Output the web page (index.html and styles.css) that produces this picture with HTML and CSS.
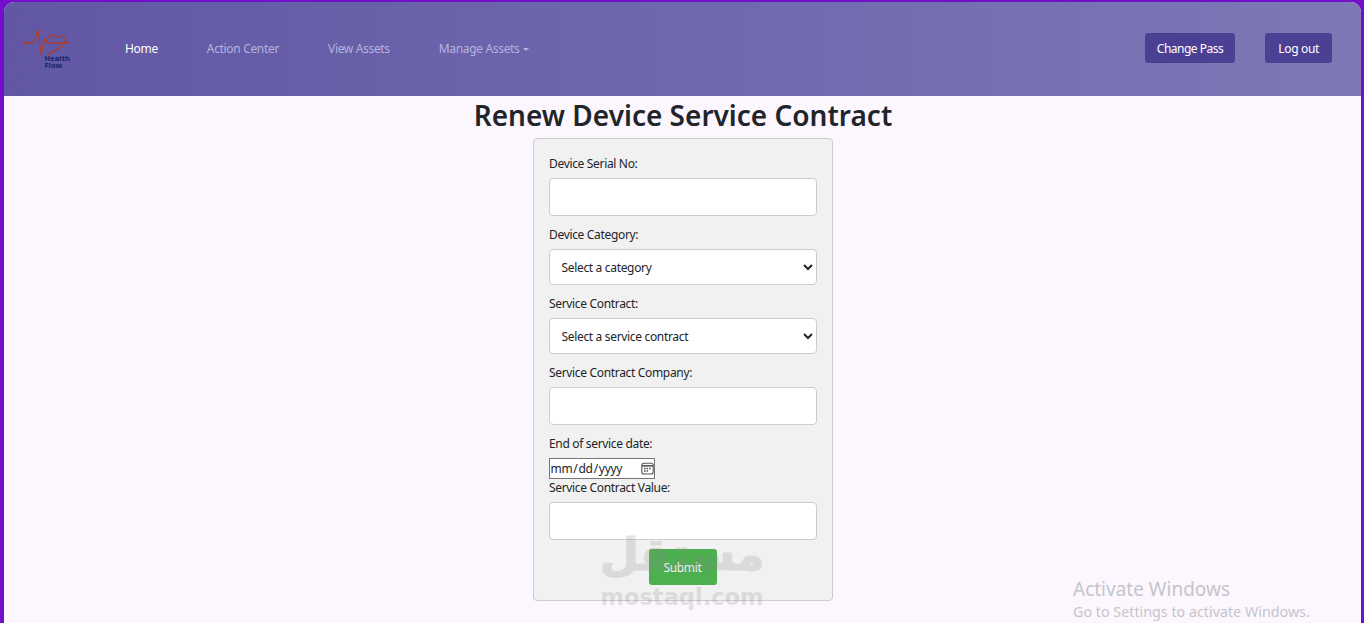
FILE: index.html
```html
<!DOCTYPE html>
<html lang="en">
<head>
<meta charset="utf-8">
<title>Renew Device Service Contract</title>
<link rel="stylesheet" href="styles.css">
</head>
<body>
<div class="frame">
  <header class="topbar">
    <a class="logo" href="#" aria-label="Health Flow">
      <svg class="logo-svg" width="72" height="94" viewBox="0 0 72 94">
        <g fill="#453c8a">
          <circle cx="8" cy="9" r=".6"/><circle cx="14" cy="13" r=".6"/><circle cx="6" cy="21" r=".6"/><circle cx="12" cy="25" r=".6"/><circle cx="7" cy="37" r=".6"/><circle cx="10" cy="49" r=".6"/><circle cx="6" cy="59" r=".6"/><circle cx="12" cy="62" r=".6"/><circle cx="16" cy="73" r=".6"/><circle cx="8" cy="83" r=".6"/><circle cx="14" cy="89" r=".6"/>
        </g>
        <path d="M20 41H29L31 37L34 27L37 53L40 37L42 41H66M42 41C43 36 45 33 48 33C51 33 53 36 55 35C58 33 62 35 61 39C60 44 52 48 44 53" fill="none" stroke="#a8402f" stroke-width="1.3"/>
        <circle cx="20.5" cy="41" r="1.8" fill="#a8402f"/>
        <text class="logo-text" x="40.5" y="58.5">Health</text>
        <text class="logo-text" x="40.5" y="65.8">Flow</text>
      </svg>
    </a>
    <nav class="nav">
      <a class="nav-link active" href="#">Home</a>
      <a class="nav-link" href="#">Action Center</a>
      <a class="nav-link" href="#">View Assets</a>
      <a class="nav-link caret" href="#">Manage Assets</a>
    </nav>
    <div class="actions">
      <button class="btn-nav btn-tight" type="button">Change Pass</button>
      <button class="btn-nav" type="button">Log out</button>
    </div>
  </header>
  <main class="content">
    <h1 class="title">Renew Device Service Contract</h1>
    <form class="card">
      <label class="label" for="serial">Device Serial No:</label>
      <input class="control" id="serial" type="text">
      <label class="label" for="category">Device Category:</label>
      <select class="control select" id="category"><option>Select a category</option></select>
      <label class="label" for="contract">Service Contract:</label>
      <select class="control select" id="contract"><option>Select a service contract</option></select>
      <label class="label" for="company">Service Contract Company:</label>
      <input class="control" id="company" type="text">
      <label class="label" for="end">End of service date:</label>
      <input class="date" id="end" type="date">
      <label class="label" for="value">Service Contract Value:</label>
      <input class="control" id="value" type="text">
      <button class="submit" type="submit">Submit</button>
    </form>
  </main>
  <div class="watermark" aria-hidden="true">
    <div class="wm-ar" lang="ar" dir="rtl">مستقل</div>
    <div class="wm-en">mostaql.com</div>
  </div>
  <div class="activate">
    <div class="activate-title">Activate Windows</div>
    <div class="activate-sub">Go to Settings to activate Windows.</div>
  </div>
</div>
</body>
</html>
```
FILE: styles.css
```css
* { box-sizing: border-box; }
html, body { margin: 0; height: 100%; }
body {
  background: #7110c8;
  padding: 2px 3px 0 4px;
  overflow: hidden;
  font-family: "Noto Sans", "Open Sans", sans-serif;
  font-size: 12px;
  letter-spacing: -.33px;
  color: #212529;
}
.frame {
  height: 621px;
  background: #fcf7ff;
  border-radius: 10px 10px 0 0;
  overflow: hidden;
}
.topbar {
  height: 94px;
  display: flex;
  align-items: center;
  background: linear-gradient(90deg, #6157a5 0%, #7e78b6 100%);
}
.logo { display: block; width: 72px; height: 94px; flex: none; }
.logo-svg { display: block; }
.logo-text { font-family: "Noto Sans", sans-serif; font-size: 7.5px; font-weight: 800; letter-spacing: 0; fill: #1e2a6e; }
.nav { display: flex; gap: 49px; margin-left: 49px; }
.nav-link { color: #b4b4de; text-decoration: none; line-height: 20px; }
.nav-link.active { color: #fff; }
.caret::after {
  content: "";
  display: inline-block;
  margin-left: 3px;
  vertical-align: 2px;
  border-top: 3.5px solid currentColor;
  border-left: 3.5px solid transparent;
  border-right: 3.5px solid transparent;
}
.actions { margin-left: auto; margin-right: 29px; margin-bottom: 2px; display: flex; gap: 30px; }
.btn-nav {
  height: 30px;
  padding: 0 13px;
  border: 0;
  border-radius: 3px;
  background: #4c4095;
  color: #fff;
  font: inherit;
  letter-spacing: inherit;
}
.btn-tight { padding: 0 12px; letter-spacing: -.5px; }
.content { display: flex; flex-direction: column; align-items: center; }
.title { margin: 0; height: 42px; padding-left: 1px; font-size: 28px; line-height: 38px; font-weight: 600; letter-spacing: 0; color: #212529; }
.card {
  width: 300px;
  height: 463px;
  padding: 15px;
  background: #f1f1f1;
  border: 1px solid #ccc;
  border-radius: 4px;
  display: flex;
  flex-direction: column;
}
.label { line-height: 19px; margin-bottom: 5px; padding-left: .5px; }
.control {
  width: 100%;
  height: 38px;
  flex: none;
  margin-bottom: 9px;
  padding: 6px 8px;
  background: #fff;
  border: 1px solid #ccc;
  border-radius: 4px;
  font: inherit;
  letter-spacing: inherit;
  color: #212529;
}
.select { height: 36px; }
.date {
  width: 106px;
  height: 21px;
  flex: none;
  padding: 1px 0;
  border: 1px solid #767676;
  background: #fff;
  font: 12px "Noto Sans", sans-serif;
  letter-spacing: -.3px;
  color: #212529;
  margin-bottom: -1px;
}
.date::-webkit-calendar-picker-indicator {
  width: 13px;
  height: 13px;
  margin: 0;
  padding: 0;
  background: url("data:image/svg+xml,%3Csvg xmlns='http://www.w3.org/2000/svg' viewBox='0 0 13 13'%3E%3Crect x='.8' y='1.2' width='11.4' height='10.8' rx='2' fill='none' stroke='%23555' stroke-width='1.1'/%3E%3Cpath d='M1 3.8H12' stroke='%23555' stroke-width='1.6'/%3E%3Cpath d='M3 6.5H10M3 9H8' stroke='%23555' stroke-width='1.3' stroke-dasharray='1.6 .9'/%3E%3C/svg%3E") center / 13px no-repeat;
}
.submit {
  align-self: center;
  width: 68px;
  height: 36px;
  border: 0;
  border-radius: 3px;
  background: #4caf50;
  color: #fff;
  font: inherit;
  letter-spacing: inherit;
}
.watermark {
  position: absolute;
  left: 597px;
  top: 528px;
  width: 170px;
  text-align: center;
  color: #8a8a8a;
  opacity: .22;
  font-family: "DejaVu Sans", sans-serif;
  font-weight: 700;
  letter-spacing: 0;
  pointer-events: none;
}
.wm-ar { font-size: 45px; line-height: 54px; -webkit-text-stroke: 1.2px #8a8a8a; }
.wm-en { font-size: 22.5px; line-height: 30px; }
.activate { position: absolute; left: 1073px; top: 577px; color: #c6c4c9; letter-spacing: 0; pointer-events: none; }
.activate-title { font-size: 19px; line-height: 25px; }
.activate-sub { font-size: 14.3px; line-height: 20px; }
```
